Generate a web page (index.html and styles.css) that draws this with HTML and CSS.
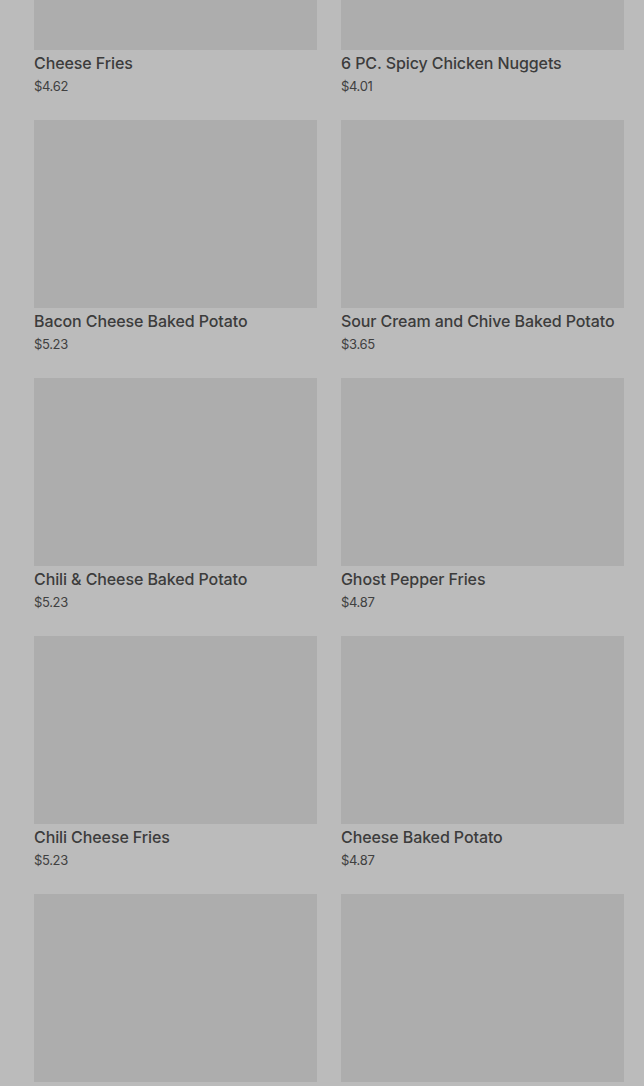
FILE: index.html
```html
<!DOCTYPE html>
<html lang="en">
<head>
  <meta charset="UTF-8">
  <meta name="viewport" content="width=device-width, initial-scale=1.0">
  <title>Menu</title>
  <link rel="stylesheet" href="styles.css">
</head>
<body>
  <div class="menu">
    <div class="item">
      <div class="item-image"></div>
      <div class="item-name">Cheese Fries</div>
      <div class="item-price">$4.62</div>
    </div>
    <div class="item">
      <div class="item-image"></div>
      <div class="item-name">6 PC. Spicy Chicken Nuggets</div>
      <div class="item-price">$4.01</div>
    </div>
    <div class="item">
      <div class="item-image"></div>
      <div class="item-name">Bacon Cheese Baked Potato</div>
      <div class="item-price">$5.23</div>
    </div>
    <div class="item">
      <div class="item-image"></div>
      <div class="item-name">Sour Cream and Chive Baked Potato</div>
      <div class="item-price">$3.65</div>
    </div>
    <div class="item">
      <div class="item-image"></div>
      <div class="item-name">Chili &amp; Cheese Baked Potato</div>
      <div class="item-price">$5.23</div>
    </div>
    <div class="item">
      <div class="item-image"></div>
      <div class="item-name">Ghost Pepper Fries</div>
      <div class="item-price">$4.87</div>
    </div>
    <div class="item">
      <div class="item-image"></div>
      <div class="item-name">Chili Cheese Fries</div>
      <div class="item-price">$5.23</div>
    </div>
    <div class="item">
      <div class="item-image"></div>
      <div class="item-name">Cheese Baked Potato</div>
      <div class="item-price">$4.87</div>
    </div>
    <div class="item">
      <div class="item-image"></div>
      <div class="item-name"></div>
      <div class="item-price"></div>
    </div>
    <div class="item">
      <div class="item-image"></div>
      <div class="item-name"></div>
      <div class="item-price"></div>
    </div>
  </div>
</body>
</html>
```

FILE: styles.css
```css
body {
  margin: 0;
  padding: 0;
  background-color: #bbbbbb;
  font-family: Inter, "Noto Sans", sans-serif;
  overflow: hidden;
}
.menu {
  display: grid;
  grid-template-columns: 1fr 1fr;
  column-gap: 24px;
  row-gap: 24px;
  padding: 0 20px 0 34px;
  margin-top: -138px; /* page is scrolled */
}
.item-image {
  height: 188px;
  background-color: #adadad;
}
.item-name {
  margin-top: 3px;
  height: 20px;
  line-height: 20px;
  font-size: 16px;
  font-weight: 500;
  letter-spacing: -0.1px;
  color: #3c3c3c;
  white-space: nowrap;
}
.item-price {
  margin-top: 3px;
  height: 20px;
  line-height: 20px;
  font-size: 13px;
  letter-spacing: -0.35px;
  color: #404040;
}
```
